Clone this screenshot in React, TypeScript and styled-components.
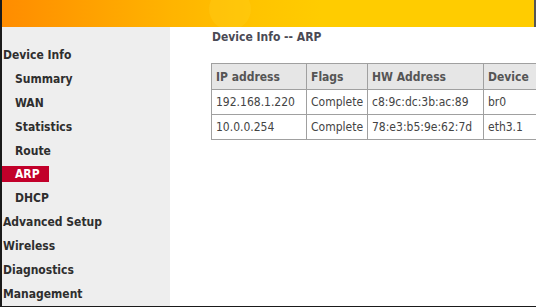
import React from "react";
import styled, { createGlobalStyle } from "styled-components";

const Global = createGlobalStyle`
  html, body { margin: 0; padding: 0; background: #fff; }
  body { font-family: Tahoma, "DejaVu Sans Condensed", "DejaVu Sans", sans-serif; }
`;

const Frame = styled.div`
  width: 534px;
  height: 306px;
  border-left: 2px solid #1a1a1a;
  border-bottom: 1px solid #1a1a1a;
  overflow: hidden;
  display: flex;
  flex-direction: column;
`;

const Banner = styled.div`
  height: 27px;
  flex: none;
  position: relative;
  overflow: hidden;
  border-right: 2px solid #555;
  background: linear-gradient(90deg, #ff8c00 0%, #ffa000 16%, #ffb400 32%, #ffc400 48%, #ffcc00 60%, #ffcc00 100%);
`;

const Glow = styled.div`
  position: absolute;
  left: 207px;
  top: -12px;
  width: 42px;
  height: 42px;
  border-radius: 50%;
  background: rgba(255, 214, 40, 0.25);
`;

const Body = styled.div`
  flex: 1;
  display: flex;
  min-height: 0;
`;

const Sidebar = styled.nav`
  width: 168px;
  flex: none;
  background: #eeeeee;
  padding-top: 16px;
  display: flex;
  flex-direction: column;
`;

const MenuItem = styled.div<{ $sub?: boolean }>`
  height: 24px;
  display: flex;
  align-items: center;
  font-weight: bold;
  font-size: 12px;
  color: #2e2e2e;
  padding-left: ${(p) => (p.$sub ? "13px" : "1px")};
`;

const ActiveLabel = styled.span`
  background: #c2002a;
  color: #fff;
  margin-left: -15px;
  padding: 1px 0 1px 15px;
  width: 34px;
  line-height: 14px;
`;

const Content = styled.main`
  flex: 1;
  padding: 0 0 0 42px;
  min-width: 0;
  overflow: hidden;
`;

const Title = styled.div`
  font-weight: bold;
  font-size: 12px;
  color: #4a4a55;
  height: 18px;
  line-height: 18px;
  margin-top: 1px;
`;

const Table = styled.table`
  margin-top: 17px;
  margin-left: -1px;
  border-collapse: collapse;
  table-layout: fixed;
  width: 340px;
  font-size: 12px;
  color: #444;
`;

const Th = styled.th<{ $w: number }>`
  width: ${(p) => p.$w}px;
  height: 25px;
  background: #e6e6e6;
  color: #555;
  font-weight: bold;
  text-align: left;
  padding: 0 4px;
  border: 1px solid #a0a0a0;
  white-space: nowrap;
  overflow: hidden;
`;

const Td = styled.td`
  height: 24px;
  padding: 0 4px;
  border: 1px solid #a0a0a0;
  white-space: nowrap;
  overflow: hidden;
`;

const menu: { label: string; sub?: boolean; active?: boolean }[] = [
  { label: "Device Info" },
  { label: "Summary", sub: true },
  { label: "WAN", sub: true },
  { label: "Statistics", sub: true },
  { label: "Route", sub: true },
  { label: "ARP", sub: true, active: true },
  { label: "DHCP", sub: true },
  { label: "Advanced Setup" },
  { label: "Wireless" },
  { label: "Diagnostics" },
  { label: "Management" },
];

const rows = [
  ["192.168.1.220", "Complete", "c8:9c:dc:3b:ac:89", "br0"],
  ["10.0.0.254", "Complete", "78:e3:b5:9e:62:7d", "eth3.1"],
];

export default function App() {
  return (
    <>
      <Global />
      <Frame>
        <Banner>
          <Glow />
        </Banner>
        <Body>
          <Sidebar>
            {menu.map((m) => (
              <MenuItem key={m.label} $sub={m.sub}>
                {m.active ? <ActiveLabel>{m.label}</ActiveLabel> : m.label}
              </MenuItem>
            ))}
          </Sidebar>
          <Content>
            <Title>Device Info -- ARP</Title>
            <Table>
              <thead>
                <tr>
                  <Th $w={86}>IP address</Th>
                  <Th $w={52}>Flags</Th>
                  <Th $w={107}>HW Address</Th>
                  <Th $w={59}>Device</Th>
                </tr>
              </thead>
              <tbody>
                {rows.map((r) => (
                  <tr key={r[0]}>
                    {r.map((c, i) => (
                      <Td key={i}>{c}</Td>
                    ))}
                  </tr>
                ))}
              </tbody>
            </Table>
          </Content>
        </Body>
      </Frame>
    </>
  );
}
